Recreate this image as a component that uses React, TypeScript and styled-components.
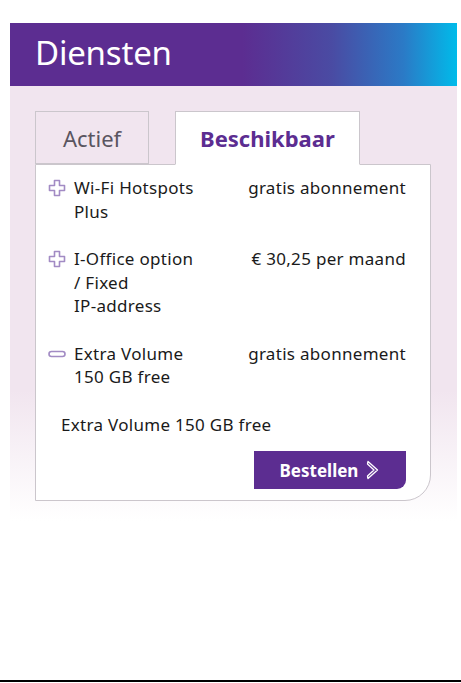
import styled, { createGlobalStyle } from 'styled-components'

const Purple = '#5c2d91'
const Lavender = '#f1e5ef'
const Line = '#cbc6cc'

const GlobalStyle = createGlobalStyle`
  html, body {
    margin: 0;
    padding: 0;
    background: #fff;
  }
  body {
    font-family: 'Noto Sans', 'Open Sans', sans-serif;
    color: #1a1a1a;
  }
  #root {
    min-height: 100vh;
    display: flex;
    flex-direction: column;
  }
`

type Service = {
  name: string
  price: string
  open: boolean
}

const services: Service[] = [
  { name: 'Wi-Fi Hotspots Plus', price: 'gratis abonnement', open: false },
  { name: 'I-Office option / Fixed IP-address', price: '€ 30,25 per maand', open: false },
  { name: 'Extra Volume 150 GB free', price: 'gratis abonnement', open: true },
]

function PlusIcon() {
  return (
    <svg width="18" height="18" viewBox="0 0 18 18">
      <path
        d="M6.5 1.5h5v5h5v5h-5v5h-5v-5h-5v-5h5z"
        fill="none"
        stroke="#a28bc4"
        strokeWidth="1.6"
        strokeLinejoin="round"
      />
    </svg>
  )
}

function MinusIcon() {
  return (
    <svg width="18" height="18" viewBox="0 0 18 18">
      <rect x="1" y="6.5" width="16" height="5" rx="2.5" fill="none" stroke="#a28bc4" strokeWidth="1.6" />
    </svg>
  )
}

function ChevronIcon() {
  return (
    <svg width="14" height="22" viewBox="0 0 14 22">
      <path
        d="M2 2.5l9.5 8.5L2 19.5l-0.5-2.5L8 11 1.5 5z"
        fill="none"
        stroke="#fff"
        strokeWidth="1.3"
        strokeLinejoin="round"
      />
    </svg>
  )
}

// words never break at their hyphens, only at spaces
function Words({ text }: { text: string }) {
  const words = text.split(' ')
  return (
    <>
      {words.map((w, i) => (
        <span key={i}>
          <Word>{w}</Word>
          {i < words.length - 1 ? ' ' : ''}
        </span>
      ))}
    </>
  )
}

export default function App() {
  return (
    <>
      <GlobalStyle />
      <Page>
        <Header>
          <Title>Diensten</Title>
        </Header>
        <Section>
          <Tabs>
            <Tab $active={false}>Actief</Tab>
            <Tab $active>Beschikbaar</Tab>
          </Tabs>
          <Card>
            {services.map(s => (
              <Row key={s.name}>
                <IconCell>{s.open ? <MinusIcon /> : <PlusIcon />}</IconCell>
                <Name><Words text={s.name} /></Name>
                <Price>{s.price}</Price>
              </Row>
            ))}
            <Detail>Extra Volume 150 GB free</Detail>
            <Actions>
              <OrderButton>
                Bestellen
                <ChevronIcon />
              </OrderButton>
            </Actions>
          </Card>
        </Section>
      </Page>
      <BottomRule />
    </>
  )
}

const Page = styled.div`
  flex: 1;
  padding: 23px 4px 0 10px;
`

const Header = styled.header`
  height: 63px;
  box-sizing: border-box;
  display: flex;
  align-items: center;
  padding: 0 0 5px 25px;
  background: linear-gradient(90deg, ${Purple} 0%, ${Purple} 52%, #4a4ba3 72%, #2b7ac6 88%, #00bbea 100%);
`

const Title = styled.h1`
  margin: 0;
  font-size: 33px;
  font-weight: 400;
  color: #fff;
  letter-spacing: -0.2px;
`

const Section = styled.section`
  padding: 25px 26px 20px 25px;
  background: linear-gradient(180deg, ${Lavender} 0%, ${Lavender} 70%, #fff 100%);
`

const Tabs = styled.div`
  display: flex;
  gap: 26px;
  margin-bottom: -1px;
  position: relative;
  z-index: 1;
`

const Tab = styled.div<{ $active: boolean }>`
  box-sizing: border-box;
  display: flex;
  align-items: center;
  justify-content: center;
  padding: 0 24px;
  min-width: 114px;
  border: 1px solid ${Line};
  border-bottom-color: ${p => (p.$active ? '#fff' : Line)};
  background: ${p => (p.$active ? '#fff' : Lavender)};
  color: ${p => (p.$active ? Purple : '#5a5560')};
  font-size: 22px;
  font-weight: ${p => (p.$active ? 700 : 400)};
  height: ${p => (p.$active ? '54px' : '53px')};
`

const Card = styled.div`
  background: #fff;
  border: 1px solid ${Line};
  border-bottom-right-radius: 26px;
  padding: 11px 24px 11px 12px;
`

const Row = styled.div`
  display: grid;
  grid-template-columns: 26px 132px 1fr;
  align-items: start;
  font-size: 17px;
  letter-spacing: 0.3px;
  line-height: 23.5px;
  margin-bottom: 24px;
`

const IconCell = styled.div`
  padding-top: 3px;
  display: flex;
`

const Name = styled.div`
  padding-right: 4px;
`

const Word = styled.span`
  white-space: nowrap;
`

const Price = styled.div`
  text-align: right;
  white-space: nowrap;
`

const Detail = styled.div`
  font-size: 17px;
  letter-spacing: 0.3px;
  line-height: 23.5px;
  padding-left: 13px;
`

const Actions = styled.div`
  display: flex;
  justify-content: flex-end;
  margin-top: 15px;
`

const OrderButton = styled.button`
  width: 152px;
  height: 38px;
  display: flex;
  align-items: center;
  justify-content: center;
  gap: 8px;
  border: none;
  border-bottom-right-radius: 9px;
  background: ${Purple};
  color: #fff;
  font-family: inherit;
  font-size: 17px;
  font-weight: 700;
  cursor: pointer;
`

const BottomRule = styled.div`
  height: 2px;
  background: #000;
  margin-bottom: 1px;
`
